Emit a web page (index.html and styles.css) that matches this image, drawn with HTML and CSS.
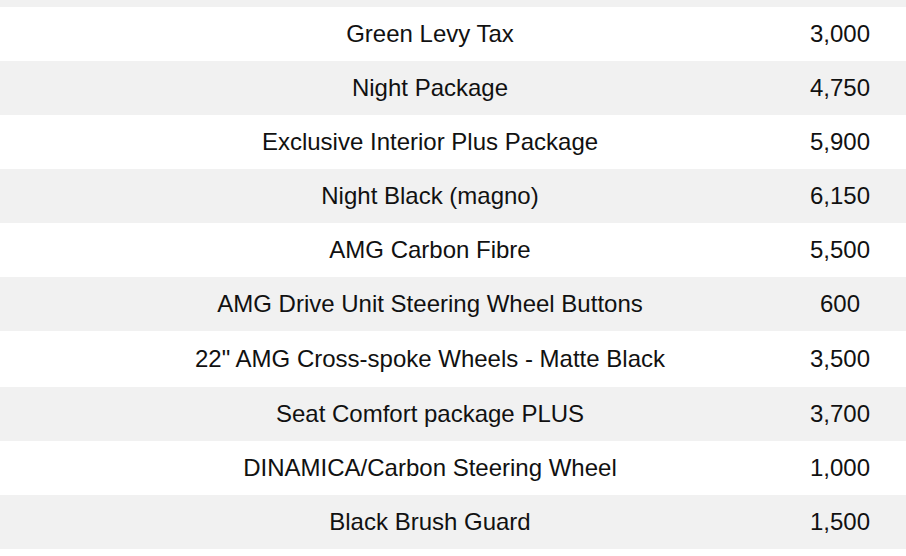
FILE: index.html
```html
<!DOCTYPE html>
<html lang="en">
<head>
<meta charset="utf-8">
<title>Options</title>
<link rel="stylesheet" href="styles.css">
</head>
<body>
<div class="table">
  <div class="lead"></div>
  <div class="row"><div class="name">Green Levy Tax</div><div class="price">3,000</div></div>
  <div class="row alt"><div class="name">Night Package</div><div class="price">4,750</div></div>
  <div class="row"><div class="name">Exclusive Interior Plus Package</div><div class="price">5,900</div></div>
  <div class="row alt"><div class="name">Night Black (magno)</div><div class="price">6,150</div></div>
  <div class="row"><div class="name">AMG Carbon Fibre</div><div class="price">5,500</div></div>
  <div class="row alt"><div class="name">AMG Drive Unit Steering Wheel Buttons</div><div class="price">600</div></div>
  <div class="row tall"><div class="name">22" AMG Cross-spoke Wheels - Matte Black</div><div class="price">3,500</div></div>
  <div class="row alt"><div class="name">Seat Comfort package PLUS</div><div class="price">3,700</div></div>
  <div class="row"><div class="name">DINAMICA/Carbon Steering Wheel</div><div class="price">1,000</div></div>
  <div class="row alt"><div class="name">Black Brush Guard</div><div class="price">1,500</div></div>
</div>
</body>
</html>
```
FILE: styles.css
```css
html, body {
  margin: 0;
  padding: 0;
  background: #ffffff;
}
body {
  width: 906px;
  height: 556px;
  overflow: hidden;
  font-family: "Liberation Sans", Arial, sans-serif;
  font-size: 24px;
  color: #111111;
}
.table {
  display: flex;
  flex-direction: column;
}
.lead {
  height: 7px;
  background: #f1f1f1;
}
.row {
  display: grid;
  grid-template-columns: 774px 132px;
  height: 54px;
  align-items: center;
  background: #ffffff;
}
.row.alt {
  background: #f1f1f1;
}
.row.tall {
  height: 56px;
}
.name {
  padding-left: 86px;
  text-align: center;
  white-space: nowrap;
}
.price {
  text-align: center;
}
```
